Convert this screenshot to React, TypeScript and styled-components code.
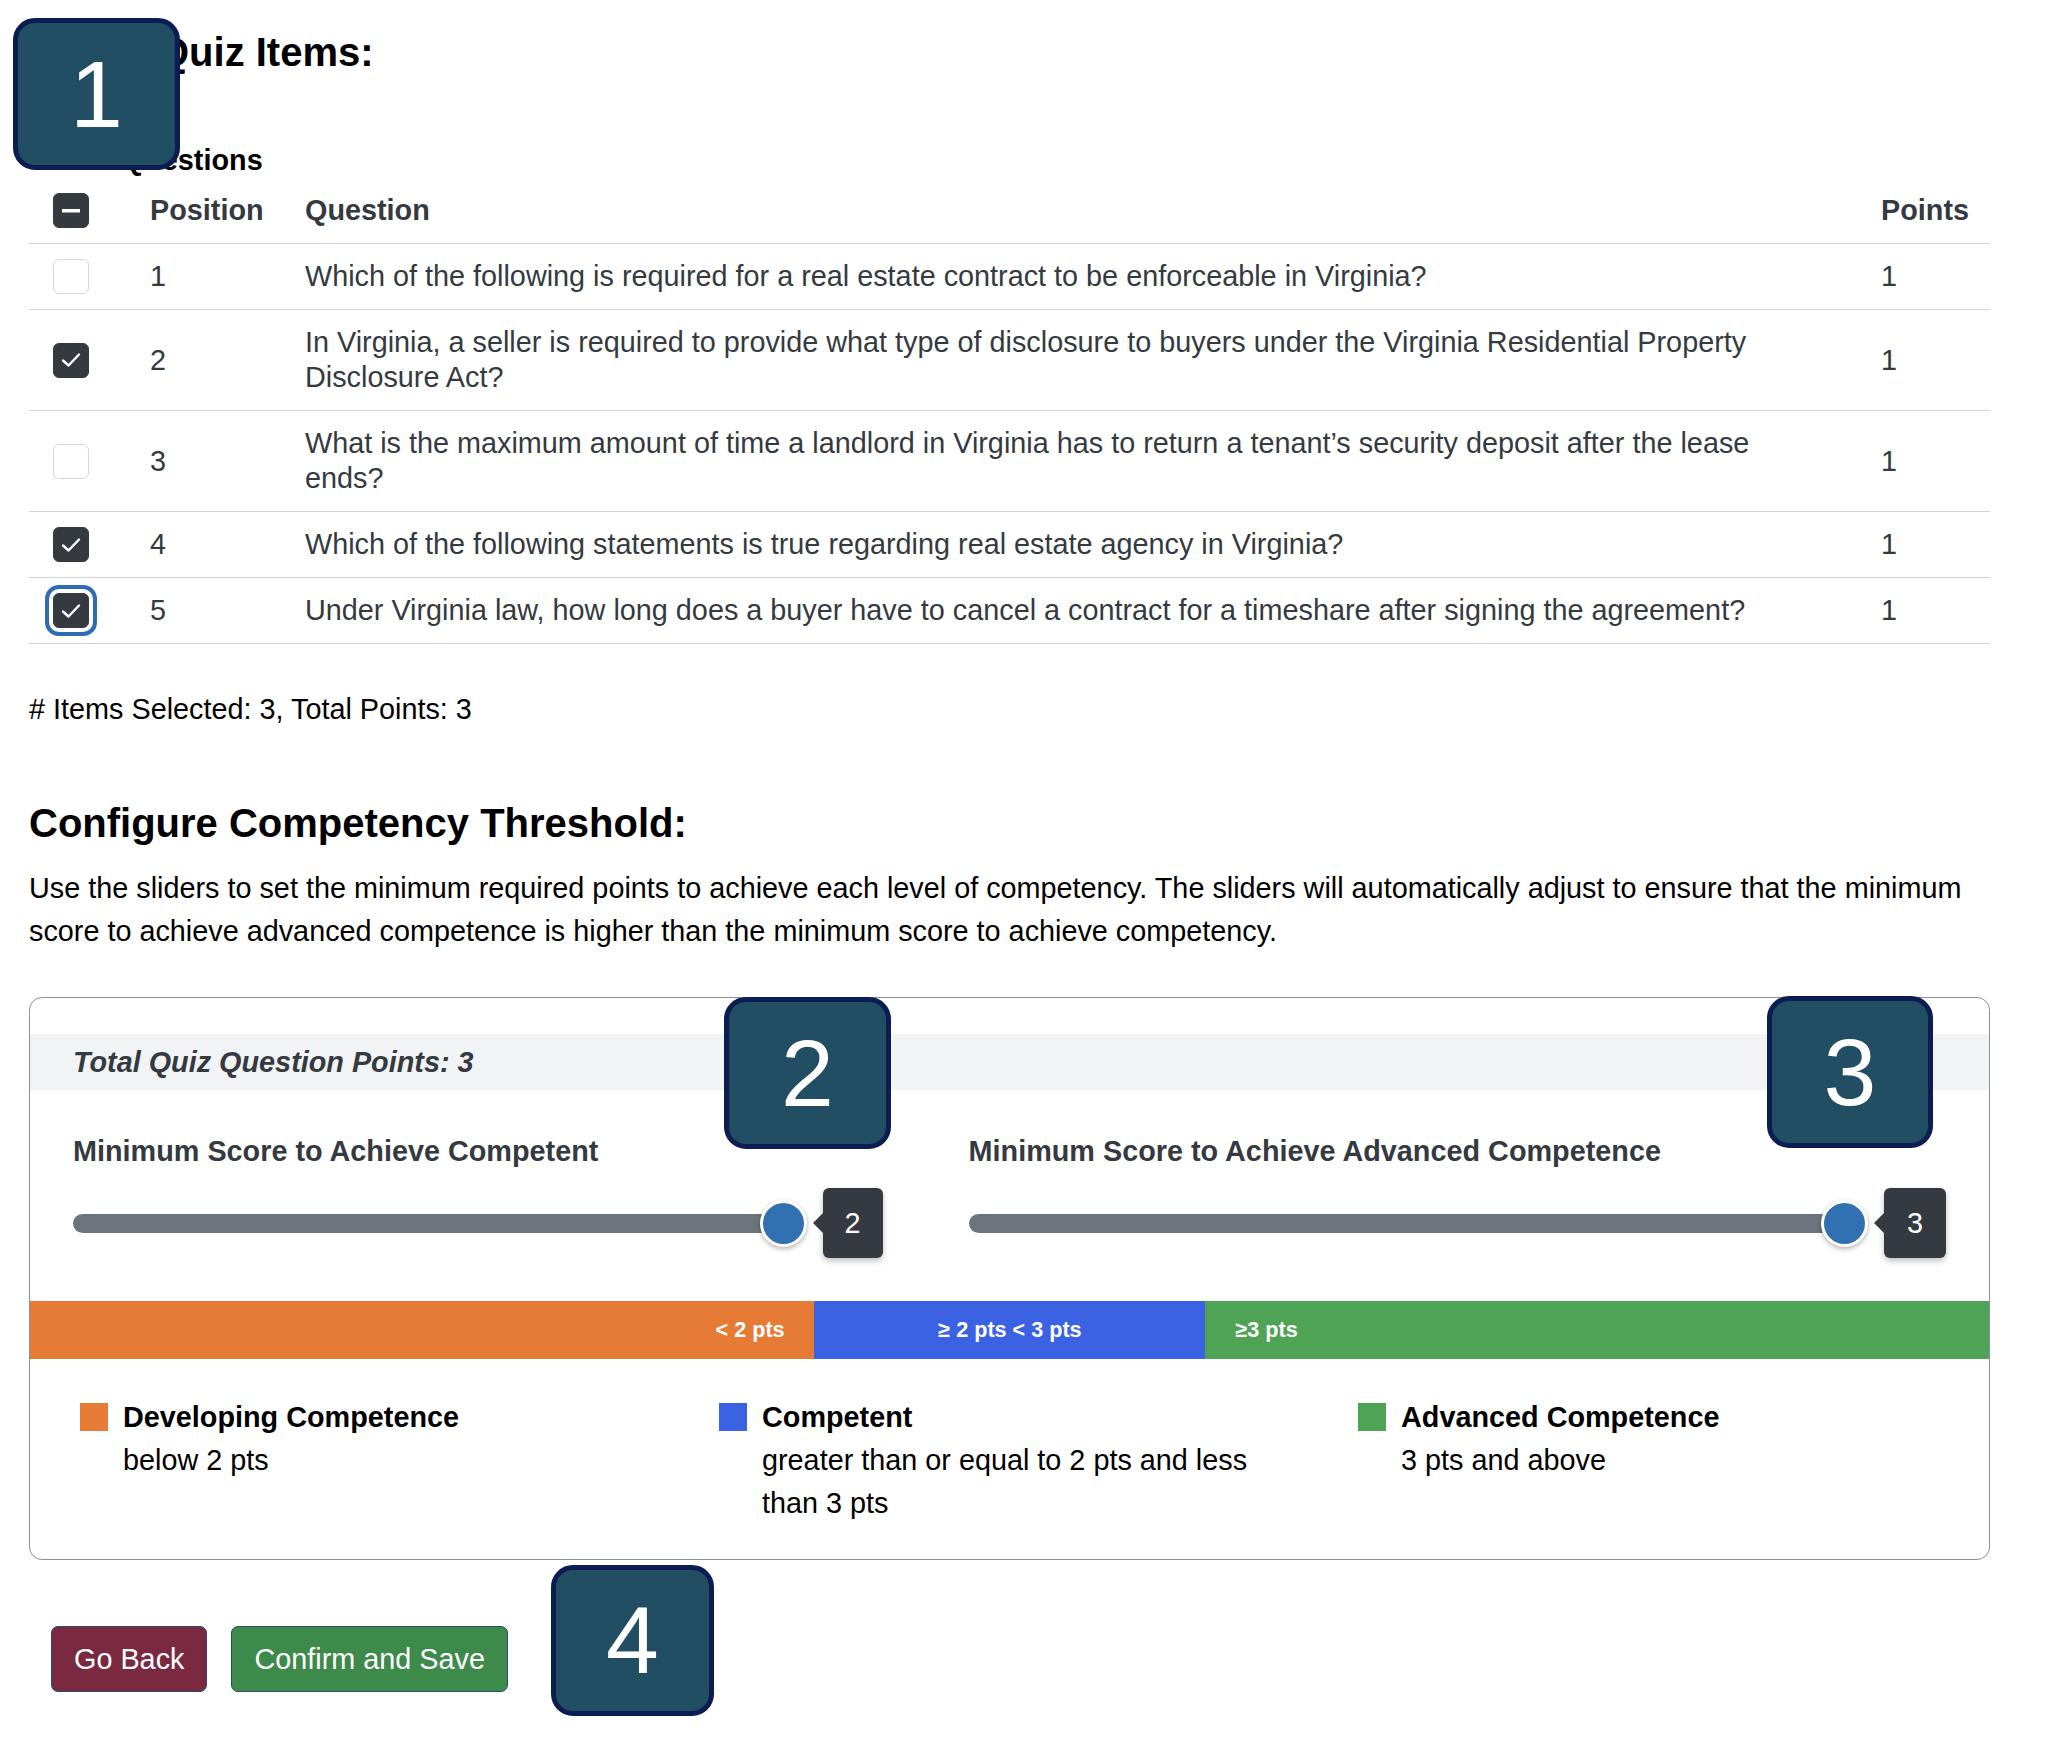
import styled, { createGlobalStyle } from 'styled-components';

const GlobalStyle = createGlobalStyle`
  body {
    margin: 0;
    background: #fff;
    font-family: "Liberation Sans", Arial, Helvetica, sans-serif;
    color: #000;
  }
`;

const Page = styled.div`
  position: relative;
  padding: 28px 64px 40px 29px;
  font-size: 28.8px;
`;

const Title = styled.h2`
  margin: 0;
  font-size: 40px;
  line-height: 48px;
  font-weight: 700;
`;

const Caption = styled.div`
  margin-top: 67px;
  font-size: 28.8px;
  line-height: 35px;
  font-weight: 700;
`;

const Table = styled.table`
  width: 100%;
  border-collapse: collapse;
  table-layout: fixed;
  color: #343a40;
`;

const Th = styled.th<{ $w?: number }>`
  box-sizing: border-box;
  width: ${(p) => (p.$w ? `${p.$w}px` : 'auto')};
  text-align: left;
  font-weight: 700;
  padding: 15px 24px;
  line-height: 35px;
  border-bottom: 1.5px solid #ced3d9;
  vertical-align: middle;
`;

const Td = styled.td<{ $wide?: boolean }>`
  box-sizing: border-box;
  padding: 15px ${(p) => (p.$wide ? '56px' : '24px')} 15px 24px;
  line-height: 35px;
  border-bottom: 1.5px solid #ced3d9;
  vertical-align: middle;
`;

const Box = styled.span<{ $on?: boolean; $focus?: boolean }>`
  display: flex;
  align-items: center;
  justify-content: center;
  width: 36px;
  height: 35px;
  box-sizing: border-box;
  border-radius: 6px;
  background: ${(p) => (p.$on ? '#343a40' : '#fff')};
  border: 1.5px solid ${(p) => (p.$on ? '#343a40' : '#d4d8dd')};
  box-shadow: ${(p) => (p.$focus ? '0 0 0 4px #fff, 0 0 0 8px #2f6db3' : 'none')};
`;

const Summary = styled.p`
  margin: 44px 0 0;
  line-height: 43px;
`;

const Heading = styled.h3`
  margin: 68px 0 0;
  font-size: 40px;
  line-height: 48px;
  font-weight: 700;
`;

const Lead = styled.p`
  margin: 20px 0 0;
  line-height: 43.2px;
`;

const Card = styled.div`
  margin-top: 44px;
  border: 1.5px solid #8a9097;
  border-radius: 13px;
  padding-top: 36px;
  overflow: hidden;
`;

const Band = styled.div`
  background: #f2f3f5;
  height: 56px;
  display: flex;
  align-items: center;
  padding-left: 43px;
  font-style: italic;
  font-weight: 700;
  color: #343a40;
`;

const SliderGrid = styled.div`
  display: grid;
  grid-template-columns: 810fr 978fr;
  column-gap: 86px;
  padding: 44px 43px 0;
`;

const SliderLabel = styled.div`
  font-weight: 700;
  color: #343a40;
  line-height: 35px;
`;

const SliderRow = styled.div`
  display: flex;
  align-items: center;
  margin-top: 19px;
  height: 70px;
`;

const TrackArea = styled.div`
  position: relative;
  flex: 1;
  display: flex;
  align-items: center;
  height: 47px;
`;

const Track = styled.div`
  width: 100%;
  height: 19px;
  border-radius: 10px;
  background: #6c757d;
`;

const Thumb = styled.div`
  position: absolute;
  right: 0;
  top: 0;
  width: 47px;
  height: 47px;
  box-sizing: border-box;
  border-radius: 50%;
  background: #3171b2;
  border: 3px solid #fff;
  box-shadow: 0 2px 5px rgba(0, 0, 0, 0.3);
`;

const Bubble = styled.div<{ $w: number }>`
  position: relative;
  margin-left: 16px;
  width: ${(p) => p.$w}px;
  height: 70px;
  border-radius: 6px;
  background: #343a40;
  color: #fff;
  display: flex;
  align-items: center;
  justify-content: center;
  box-shadow: 0 3px 6px rgba(0, 0, 0, 0.25);
  &::before {
    content: '';
    position: absolute;
    left: -10px;
    top: 50%;
    margin-top: -10px;
    border-style: solid;
    border-width: 10px 10px 10px 0;
    border-color: transparent #343a40 transparent transparent;
  }
`;

const Scale = styled.div`
  display: flex;
  height: 58px;
  margin-top: 43px;
`;

const Segment = styled.div<{ $bg: string; $pct: number; $align: string }>`
  box-sizing: border-box;
  flex: none;
  width: ${(p) => p.$pct}%;
  background: ${(p) => p.$bg};
  display: flex;
  align-items: center;
  justify-content: ${(p) => p.$align};
  padding: 0 29px 0 30px;
  color: #fff;
  font-weight: 700;
  font-size: 21.6px;
`;

const Legend = styled.div`
  display: grid;
  grid-template-columns: repeat(3, 639px);
  padding: 37px 0 34px 50px;
`;

const LegendItem = styled.div`
  display: flex;
  gap: 15px;
  padding-right: 60px;
  line-height: 43px;
`;

const Swatch = styled.span<{ $bg: string }>`
  flex: none;
  width: 28px;
  height: 28px;
  margin-top: 7px;
  background: ${(p) => p.$bg};
`;

const LegendTitle = styled.div`
  font-weight: 700;
`;

const Actions = styled.div`
  display: flex;
  gap: 24px;
  margin: 66px 0 0 22px;
`;

const Button = styled.button<{ $bg: string }>`
  font-family: inherit;
  font-size: 28.8px;
  line-height: 42px;
  padding: 11px 22px;
  color: #fff;
  background: ${(p) => p.$bg};
  border: 1.5px solid #244c72;
  border-radius: 7px;
`;

const Badge = styled.div<{ $x: number; $y: number; $w: number; $h: number }>`
  position: absolute;
  left: ${(p) => p.$x}px;
  top: ${(p) => p.$y}px;
  width: ${(p) => p.$w}px;
  height: ${(p) => p.$h}px;
  box-sizing: border-box;
  background: #214e62;
  border: 5px solid #0b1d52;
  border-radius: 22px;
  color: #fff;
  font-size: 95px;
  display: flex;
  align-items: center;
  justify-content: center;
`;

const Check = () => (
  <svg width="20" height="16" viewBox="0 0 20 16">
    <path d="M2 8.5 L7.5 13.5 L18 2.5" fill="none" stroke="#fff" strokeWidth="2.4" strokeLinecap="round" strokeLinejoin="round" />
  </svg>
);

const Dash = () => (
  <svg width="18" height="4" viewBox="0 0 18 4">
    <rect x="0" y="0" width="18" height="3.5" fill="#fff" />
  </svg>
);

const questions = [
  { pos: 1, text: 'Which of the following is required for a real estate contract to be enforceable in Virginia?', on: false },
  {
    pos: 2,
    text: 'In Virginia, a seller is required to provide what type of disclosure to buyers under the Virginia Residential Property Disclosure Act?',
    on: true,
  },
  {
    pos: 3,
    text: 'What is the maximum amount of time a landlord in Virginia has to return a tenant’s security deposit after the lease ends?',
    on: false,
  },
  { pos: 4, text: 'Which of the following statements is true regarding real estate agency in Virginia?', on: true },
  {
    pos: 5,
    text: 'Under Virginia law, how long does a buyer have to cancel a contract for a timeshare after signing the agreement?',
    on: true,
    focus: true,
  },
];

function App() {
  return (
    <>
      <GlobalStyle />
      <Page>
        <Title>Select Quiz Items:</Title>
        <Caption>Select Questions</Caption>
        <Table>
          <thead>
            <tr>
              <Th $w={97}>
                <Box $on>
                  <Dash />
                </Box>
              </Th>
              <Th $w={155}>Position</Th>
              <Th>Question</Th>
              <Th $w={133}>Points</Th>
            </tr>
          </thead>
          <tbody>
            {questions.map((q) => (
              <tr key={q.pos}>
                <Td>
                  <Box $on={q.on} $focus={q.focus}>
                    {q.on && <Check />}
                  </Box>
                </Td>
                <Td>{q.pos}</Td>
                <Td $wide>{q.text}</Td>
                <Td>1</Td>
              </tr>
            ))}
          </tbody>
        </Table>

        <Summary># Items Selected: 3, Total Points: 3</Summary>

        <Heading>Configure Competency Threshold:</Heading>
        <Lead>
          Use the sliders to set the minimum required points to achieve each level of competency. The sliders will
          automatically adjust to ensure that the minimum score to achieve advanced competence is higher than the minimum
          score to achieve competency.
        </Lead>

        <Card>
          <Band>Total Quiz Question Points: 3</Band>
          <SliderGrid>
            <div>
              <SliderLabel>Minimum Score to Achieve Competent</SliderLabel>
              <SliderRow>
                <TrackArea>
                  <Track />
                  <Thumb />
                </TrackArea>
                <Bubble $w={60}>2</Bubble>
              </SliderRow>
            </div>
            <div>
              <SliderLabel>Minimum Score to Achieve Advanced Competence</SliderLabel>
              <SliderRow>
                <TrackArea>
                  <Track />
                  <Thumb />
                </TrackArea>
                <Bubble $w={62}>3</Bubble>
              </SliderRow>
            </div>
          </SliderGrid>

          <Scale>
            <Segment $bg="#e67b36" $pct={40} $align="flex-end">
              &lt; 2 pts
            </Segment>
            <Segment $bg="#3b62e3" $pct={20} $align="center">
              ≥ 2 pts &lt; 3 pts
            </Segment>
            <Segment $bg="#4ea354" $pct={40} $align="flex-start">
              ≥3 pts
            </Segment>
          </Scale>

          <Legend>
            <LegendItem>
              <Swatch $bg="#e67b36" />
              <div>
                <LegendTitle>Developing Competence</LegendTitle>
                below 2 pts
              </div>
            </LegendItem>
            <LegendItem>
              <Swatch $bg="#3b62e3" />
              <div>
                <LegendTitle>Competent</LegendTitle>
                greater than or equal to 2 pts and less than 3 pts
              </div>
            </LegendItem>
            <LegendItem>
              <Swatch $bg="#4ea354" />
              <div>
                <LegendTitle>Advanced Competence</LegendTitle>
                3 pts and above
              </div>
            </LegendItem>
          </Legend>
        </Card>

        <Actions>
          <Button $bg="#7b2941">Go Back</Button>
          <Button $bg="#3d8a4a">Confirm and Save</Button>
        </Actions>

        <Badge $x={13} $y={18} $w={167} $h={152}>1</Badge>
        <Badge $x={724} $y={997} $w={167} $h={152}>2</Badge>
        <Badge $x={1767} $y={996} $w={166} $h={152}>3</Badge>
        <Badge $x={551} $y={1565} $w={163} $h={151}>4</Badge>
      </Page>
    </>
  );
}

export default App;
